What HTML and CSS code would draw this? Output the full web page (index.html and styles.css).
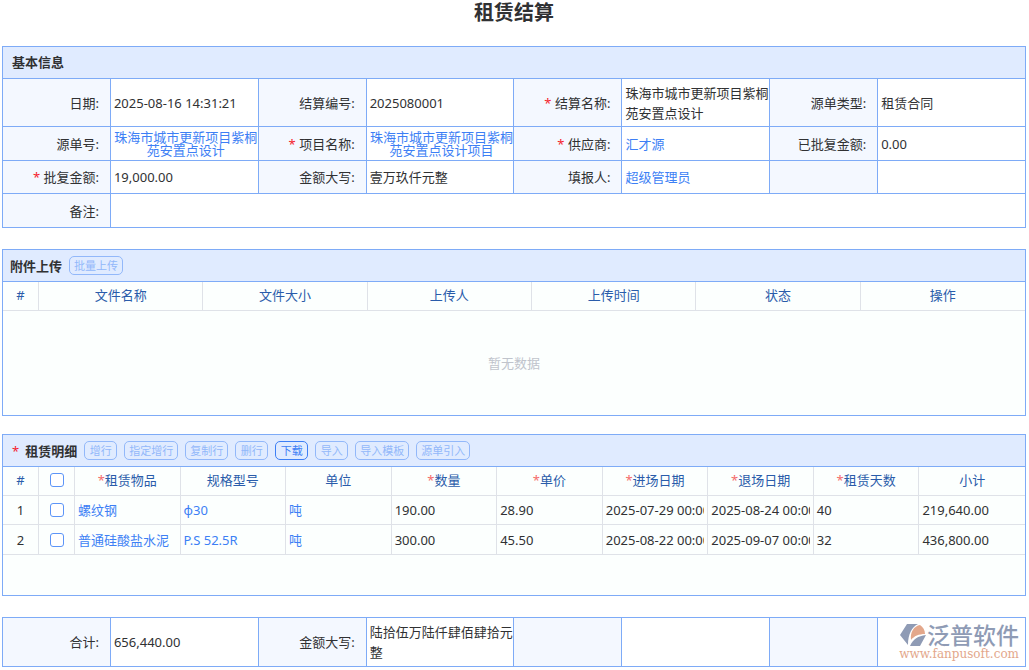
FILE: index.html
```html
<!DOCTYPE html>
<html lang="zh-CN">
<head>
<meta charset="utf-8">
<title>租赁结算</title>
<link rel="stylesheet" href="styles.css">
</head>
<body>
<main class="page">
  <h1 class="page-title">租赁结算</h1>

  <section class="form-block">
    <h2 class="form-title">基本信息</h2>
    <table class="form">
      <colgroup><col class="k"><col class="v"><col class="k"><col class="v"><col class="k"><col class="v"><col class="k"><col class="v"></colgroup>
      <tbody>
      <tr class="row-tall">
        <th>日期:</th><td>2025-08-16 14:31:21</td>
        <th>结算编号:</th><td>2025080001</td>
        <th><span class="req">*</span> 结算名称:</th><td>珠海市城市更新项目紫桐苑安置点设计</td>
        <th>源单类型:</th><td>租赁合同</td>
      </tr>
      <tr class="row-mid">
        <th>源单号:</th><td class="linked"><a href="#">珠海市城市更新项目紫桐苑安置点设计</a></td>
        <th><span class="req">*</span> 项目名称:</th><td class="linked"><a href="#">珠海市城市更新项目紫桐苑安置点设计项目</a></td>
        <th><span class="req">*</span> 供应商:</th><td><a href="#">汇才源</a></td>
        <th>已批复金额:</th><td>0.00</td>
      </tr>
      <tr class="row-low">
        <th><span class="req">*</span> 批复金额:</th><td>19,000.00</td>
        <th>金额大写:</th><td>壹万玖仟元整</td>
        <th>填报人:</th><td><a href="#">超级管理员</a></td>
        <th></th><td></td>
      </tr>
      <tr class="row-mid">
        <th>备注:</th><td colspan="7"></td>
      </tr>
      </tbody>
    </table>
  </section>

  <section class="panel files">
    <header class="panel-head">
      <h2>附件上传</h2>
      <button class="btn" type="button" disabled>批量上传</button>
    </header>
    <table class="grid">
      <colgroup><col class="num"><col><col><col><col><col><col></colgroup>
      <thead>
      <tr><th>#</th><th>文件名称</th><th>文件大小</th><th>上传人</th><th>上传时间</th><th>状态</th><th>操作</th></tr>
      </thead>
    </table>
    <p class="empty">暂无数据</p>
  </section>

  <section class="panel details">
    <header class="panel-head">
      <h2><span class="req head-req">*</span>租赁明细</h2>
      <button class="btn" type="button" disabled>增行</button>
      <button class="btn" type="button" disabled>指定增行</button>
      <button class="btn" type="button" disabled>复制行</button>
      <button class="btn" type="button" disabled>删行</button>
      <button class="btn" type="button">下载</button>
      <button class="btn" type="button" disabled>导入</button>
      <button class="btn" type="button" disabled>导入模板</button>
      <button class="btn" type="button" disabled>源单引入</button>
    </header>
    <table class="grid">
      <colgroup><col class="num"><col class="num"><col><col><col><col><col><col><col><col><col></colgroup>
      <thead>
      <tr>
        <th>#</th>
        <th><input type="checkbox" aria-label="全选"></th>
        <th><span class="star">*</span>租赁物品</th>
        <th>规格型号</th>
        <th>单位</th>
        <th><span class="star">*</span>数量</th>
        <th><span class="star">*</span>单价</th>
        <th><span class="star">*</span>进场日期</th>
        <th><span class="star">*</span>退场日期</th>
        <th><span class="star">*</span>租赁天数</th>
        <th>小计</th>
      </tr>
      </thead>
      <tbody>
      <tr>
        <td class="center">1</td>
        <td class="center"><input type="checkbox" aria-label="选择第1行"></td>
        <td><a href="#">螺纹钢</a></td>
        <td><a href="#">φ30</a></td>
        <td><a href="#">吨</a></td>
        <td>190.00</td>
        <td>28.90</td>
        <td><span class="clip">2025-07-29 00:00:00</span></td>
        <td><span class="clip">2025-08-24 00:00:00</span></td>
        <td>40</td>
        <td>219,640.00</td>
      </tr>
      <tr>
        <td class="center">2</td>
        <td class="center"><input type="checkbox" aria-label="选择第2行"></td>
        <td><a href="#">普通硅酸盐水泥</a></td>
        <td><a href="#">P.S 52.5R</a></td>
        <td><a href="#">吨</a></td>
        <td>300.00</td>
        <td>45.50</td>
        <td><span class="clip">2025-08-22 00:00:00</span></td>
        <td><span class="clip">2025-09-07 00:00:00</span></td>
        <td>32</td>
        <td>436,800.00</td>
      </tr>
      </tbody>
    </table>
  </section>

  <table class="form totals">
    <colgroup><col class="k"><col class="v"><col class="k"><col class="v"><col class="k"><col class="v"><col class="k"><col class="v"></colgroup>
    <tbody>
    <tr class="row-total">
      <th>合计:</th><td>656,440.00</td>
      <th>金额大写:</th><td>陆拾伍万陆仟肆佰肆拾元整</td>
      <th></th><td></td>
      <th></th>
      <td>
        <div class="brand">
          <div class="brand-top">
            <svg class="brand-mark" viewBox="0 0 26 24" aria-hidden="true">
              <path fill="#8f9bb5" d="M7 1H18C12 4 8 11 8 22L0 12Z"/>
              <path fill="#e3a78b" d="M11 17C10 9 14 3 20 2C23 4 25 7 25 11C19 11 14 13 11 17Z"/>
              <path fill="#8f9bb5" d="M10 23C13 16 18 13 26 12L20 23Z"/>
            </svg>
            <span class="brand-name">泛普软件</span>
          </div>
          <span class="brand-url">www.fanpusoft.com</span>
        </div>
      </td>
    </tr>
    </tbody>
  </table>
</main>
</body>
</html>
```
FILE: styles.css
```css
* { box-sizing: border-box; }

body {
  margin: 0;
  background: #fff;
  color: #303133;
  font: 13px/20px "Noto Sans", "Noto Sans CJK SC", sans-serif;
}

.page { padding: 0 3px 0 2px; }

h1, h2, p { margin: 0; }

a { color: #3d7ff5; text-decoration: none; }

.page-title {
  height: 46px;
  font-size: 20px;
  line-height: 26px;
  text-align: center;
}

.req { color: #f5222d; }
.star { color: #f56c6c; }

/* Key/value form tables */
.form-title {
  height: 32px;
  padding-left: 9px;
  border: 1px solid #7eabf7;
  border-bottom: 0;
  background: #e0ebff;
  font-size: 13px;
  line-height: 30px;
}

.form {
  width: 100%;
  table-layout: fixed;
  border-collapse: collapse;
}

.form .k { width: 10.55%; }
.form .v { width: 14.45%; }

.form th,
.form td {
  padding: 0;
  border: 1px solid #7eabf7;
  font-weight: normal;
}

.form th {
  padding-right: 11px;
  background: #f4f8ff;
  text-align: right;
}

.form td { padding-left: 3px; }

.form .linked { line-height: 13px; text-align: center; }

.row-tall { height: 48px; }
.row-mid { height: 34px; }
.row-low { height: 33px; }
.row-total { height: 49px; }

/* Panels */
.panel {
  border: 1px solid #7eabf7;
  background: #fcfffe;
}

.files { min-height: 167px; margin-top: 21px; }
.details { min-height: 162px; margin-top: 18px; }
.totals { margin-top: 21px; }

.panel-head {
  display: flex;
  align-items: center;
  gap: 7px;
  height: 32px;
  padding-left: 7px;
  border-bottom: 1px solid #7eabf7;
  background: #e0ebff;
}

.panel-head h2 { font-size: 13px; line-height: 20px; }

.head-req { padding: 0 6px 0 2px; font-weight: normal; }

.btn {
  min-width: 33px;
  height: 19px;
  padding: 0 4px;
  border: 1px solid #3d7ff5;
  border-radius: 5px;
  background: transparent;
  color: #3d7ff5;
  font: 11px/16px "Noto Sans", "Noto Sans CJK SC", sans-serif;
}

.btn:disabled { border-color: #92b8fa; color: #92b8fa; }

.grid {
  width: 100%;
  table-layout: fixed;
  border-spacing: 0;
}

.grid .num { width: 36px; }

.grid th,
.grid td {
  height: 29px;
  padding: 0 3px;
  border: solid #dfe2e8;
  border-width: 0 1px 1px 0;
  font-weight: normal;
  white-space: nowrap;
}

.grid tbody tr:last-child td { height: 30px; }

.grid th:last-child,
.grid td:last-child { border-right: 0; }

.grid th {
  padding-bottom: 2px;
  color: #2a5caa;
  text-align: center;
}

.grid .center { text-align: center; }

.clip { display: block; overflow: hidden; }

.grid input {
  display: block;
  width: 14px;
  height: 14px;
  margin: 0 auto;
  border: 1px solid #5c95f8;
  border-radius: 3px;
  background: #fff;
  appearance: none;
}

.empty {
  padding: 42px 0;
  color: #c0c4cc;
  text-align: center;
}

/* Brand */
.brand {
  display: flex;
  flex-direction: column;
  align-items: flex-end;
  padding-right: 6px;
}

.brand-top { display: flex; align-items: center; gap: 1px; }

.brand-mark { width: 26px; height: 24px; }

.brand-name {
  color: #8f9bb5;
  font-size: 23px;
  font-weight: 500;
  line-height: 24px;
}

.brand-url {
  color: #e3a78b;
  font: 12px/14px "DejaVu Serif", serif;
}
```
